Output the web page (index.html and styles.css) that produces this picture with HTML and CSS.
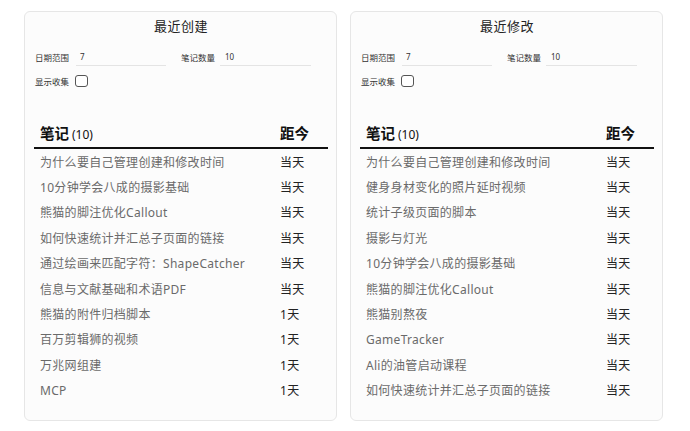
FILE: index.html
```html
<!DOCTYPE html>
<html lang="zh-CN">
<head>
<meta charset="utf-8">
<title>最近</title>
<link rel="stylesheet" href="styles.css">
</head>
<body>
<div class="card">
  <div class="title">最近创建</div>
  <div class="fields">
    <div class="field"><span class="label">日期范围</span><span class="input">7</span></div>
    <div class="field"><span class="label">笔记数量</span><span class="input">10</span></div>
  </div>
  <div class="check-row"><span class="label">显示收集</span><span class="checkbox"></span></div>
  <div class="table">
    <div class="thead"><div class="th name">笔记<span class="count">(10)</span></div><div class="th age">距今</div></div>
    <div class="row"><div class="name">为什么要自己管理创建和修改时间</div><div class="age">当天</div></div>
    <div class="row"><div class="name">10分钟学会八成的摄影基础</div><div class="age">当天</div></div>
    <div class="row"><div class="name">熊猫的脚注优化Callout</div><div class="age">当天</div></div>
    <div class="row"><div class="name">如何快速统计并汇总子页面的链接</div><div class="age">当天</div></div>
    <div class="row"><div class="name">通过绘画来匹配字符：ShapeCatcher</div><div class="age">当天</div></div>
    <div class="row"><div class="name">信息与文献基础和术语PDF</div><div class="age">当天</div></div>
    <div class="row"><div class="name">熊猫的附件归档脚本</div><div class="age">1天</div></div>
    <div class="row"><div class="name">百万剪辑狮的视频</div><div class="age">1天</div></div>
    <div class="row"><div class="name">万兆网组建</div><div class="age">1天</div></div>
    <div class="row"><div class="name">MCP</div><div class="age">1天</div></div>
  </div>
</div>
<div class="card">
  <div class="title">最近修改</div>
  <div class="fields">
    <div class="field"><span class="label">日期范围</span><span class="input">7</span></div>
    <div class="field"><span class="label">笔记数量</span><span class="input">10</span></div>
  </div>
  <div class="check-row"><span class="label">显示收集</span><span class="checkbox"></span></div>
  <div class="table">
    <div class="thead"><div class="th name">笔记<span class="count">(10)</span></div><div class="th age">距今</div></div>
    <div class="row"><div class="name">为什么要自己管理创建和修改时间</div><div class="age">当天</div></div>
    <div class="row"><div class="name">健身身材变化的照片延时视频</div><div class="age">当天</div></div>
    <div class="row"><div class="name">统计子级页面的脚本</div><div class="age">当天</div></div>
    <div class="row"><div class="name">摄影与灯光</div><div class="age">当天</div></div>
    <div class="row"><div class="name">10分钟学会八成的摄影基础</div><div class="age">当天</div></div>
    <div class="row"><div class="name">熊猫的脚注优化Callout</div><div class="age">当天</div></div>
    <div class="row"><div class="name">熊猫别熬夜</div><div class="age">当天</div></div>
    <div class="row"><div class="name">GameTracker</div><div class="age">当天</div></div>
    <div class="row"><div class="name">Ali的油管启动课程</div><div class="age">当天</div></div>
    <div class="row"><div class="name">如何快速统计并汇总子页面的链接</div><div class="age">当天</div></div>
  </div>
</div>
</body>
</html>
```
FILE: styles.css
```css
html, body {
  margin: 0;
  background: #ffffff;
}
body {
  display: flex;
  gap: 13px;
  padding: 11px 26px 0 24px;
  font-family: "Noto Sans", "Noto Sans CJK SC", sans-serif;
  color: #222;
}
.card {
  width: 313px;
  height: 410px;
  box-sizing: border-box;
  border: 1px solid #e6e6e6;
  border-radius: 6px;
  background: #fcfcfc;
  padding: 4px 9px 0 10px;
}
.title {
  text-align: center;
  font-size: 13px;
  line-height: 20px;
  letter-spacing: 0.5px;
  color: #222;
}
.fields {
  display: flex;
  gap: 15px;
  margin-top: 12px;
}
.field {
  display: flex;
  align-items: center;
  gap: 7px;
}
.label {
  font-family: "Noto Sans CJK SC", sans-serif;
  font-size: 8.5px;
  line-height: 18px;
  color: #333;
}
.input {
  width: 90px;
  height: 18px;
  box-sizing: border-box;
  border-bottom: 1px solid #e4e4e4;
  padding-left: 4px;
  font-size: 8px;
  line-height: 18px;
  color: #333;
}
.field:nth-child(2) .input {
  width: 91px;
  padding-left: 5px;
}
.field:nth-child(2) {
  gap: 5px;
}
.check-row {
  display: flex;
  align-items: center;
  gap: 6px;
  margin-top: 8px;
  height: 14px;
}
.checkbox {
  width: 13px;
  height: 12px;
  box-sizing: border-box;
  border: 1px solid #555;
  border-radius: 3px;
  background: #fff;
}
.table {
  margin-top: 35px;
  margin-left: -1px;
  width: 294px;
}
.thead, .row {
  display: grid;
  grid-template-columns: 1fr 48px;
}
.thead {
  border-bottom: 2px solid #111;
  padding-bottom: 2px;
}
.th {
  font-size: 14.5px;
  line-height: 20px;
  font-weight: 700;
  color: #111;
}
.count {
  font-size: 12px;
  font-weight: 400;
  margin-left: 3px;
}
.name {
  padding-left: 6px;
}
.row {
  height: 25.4px;
  align-items: center;
  font-size: 12px;
  letter-spacing: 0.3px;
}
.row .name {
  color: #6a6a6a;
  white-space: nowrap;
}
.row .age {
  color: #222;
}
```
